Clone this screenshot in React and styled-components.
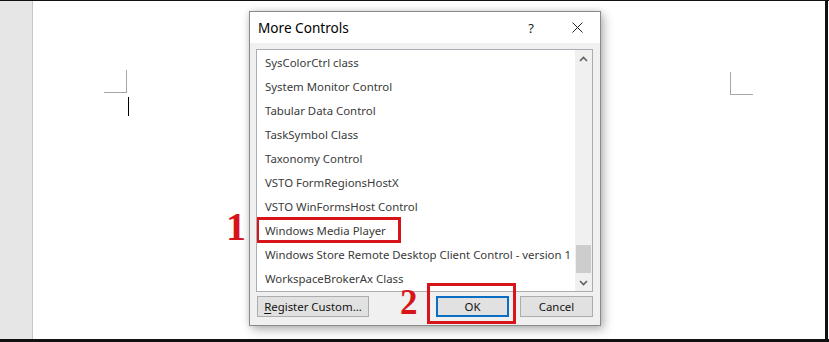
import React from 'react'
import styled, { createGlobalStyle } from 'styled-components'

const GlobalStyle = createGlobalStyle`
  html, body {
    margin: 0;
    padding: 0;
    background: #ffffff;
  }
  body {
    font-family: 'Noto Sans', 'Open Sans', sans-serif;
  }
`

const Frame = styled.div`
  width: 829px;
  height: 342px;
  box-sizing: border-box;
  border-top: 1px solid #111;
  border-bottom: 3px solid #111;
  display: grid;
  grid-template-columns: 32px 1px 792px 3px 1fr;
  background: #fff;
  overflow: hidden;
`

const Rail = styled.div`
  background: #e6e6e6;
`

const RailEdge = styled.div`
  background: #c6c6c6;
`

const Page = styled.div`
  position: relative;
  background: #ffffff;
`

const RightEdge = styled.div`
  background: #111;
`

const Corner = styled.div`
  position: absolute;
  top: ${p => p.top}px;
  left: ${p => p.left}px;
  width: 23px;
  height: 23px;
  box-sizing: border-box;
  border-bottom: 1px solid #a6a6a6;
  ${p => (p.side === 'left' ? 'border-right: 1px solid #a6a6a6;' : 'border-left: 1px solid #a6a6a6;')}
`

const Caret = styled.div`
  position: absolute;
  left: 95px;
  top: 96px;
  width: 1px;
  height: 19px;
  background: #000;
`

const Dialog = styled.div`
  position: absolute;
  left: 216px;
  top: 10px;
  width: 352px;
  height: 315px;
  box-sizing: border-box;
  border: 1px solid #8a8a8a;
  background: #f0f0f0;
  display: flex;
  flex-direction: column;
  box-shadow: 3px 4px 10px rgba(0, 0, 0, 0.28), 0 0 6px rgba(0, 0, 0, 0.12);
`

const TitleBar = styled.div`
  height: 31px;
  background: #ffffff;
  display: flex;
  align-items: center;
  padding-left: 8px;
  font-size: 13.6px;
  color: #000;
`

const Title = styled.span`
  flex: 1;
`

const TitleButton = styled.span`
  width: 46px;
  height: 31px;
  display: flex;
  align-items: center;
  justify-content: center;
  font-size: 13px;
  color: #222;
`

const Body = styled.div`
  flex: 1;
  padding: 6px 7px 8px 6px;
  display: flex;
  flex-direction: column;
  gap: 4px;
`

const ListBox = styled.div`
  height: 243px;
  box-sizing: border-box;
  border: 1px solid #aaadb3;
  background: #fff;
  display: flex;
`

const Items = styled.ul`
  flex: 1;
  list-style: none;
  margin: 0;
  padding: 0;
  overflow: hidden;
`

const Item = styled.li`
  position: relative;
  height: 24px;
  line-height: 26px;
  padding-left: 8px;
  font-size: 11.4px;
  color: #3a3a3a;
  white-space: nowrap;
  ${p =>
    p.marked &&
    `
    &::after {
      content: '';
      position: absolute;
      left: -1px;
      top: -1px;
      width: 145px;
      height: 26px;
      box-sizing: border-box;
      border: 3px solid #d7141a;
    }
  `}
`

const Callout = styled.span`
  position: absolute;
  z-index: 2;
  font-family: 'Liberation Serif', serif;
  font-weight: bold;
  color: #d7141a;
  line-height: 1;
  font-size: ${p => p.size}px;
  left: ${p => p.x}px;
  top: ${p => p.y}px;
`

const ScrollBar = styled.div`
  width: 17px;
  background: #f0f0f0;
  display: flex;
  flex-direction: column;
  align-items: center;
`

const Arrow = styled.div`
  height: 17px;
  width: 17px;
  display: flex;
  align-items: center;
  justify-content: center;
`

const Track = styled.div`
  flex: 1;
  width: 100%;
  display: flex;
  flex-direction: column;
  justify-content: flex-end;
  padding-bottom: 1px;
`

const Thumb = styled.div`
  height: 28px;
  margin: 0 1px;
  background: #cdcdcd;
`

const ButtonRow = styled.div`
  display: flex;
  align-items: center;
`

const Button = styled.button`
  height: 21px;
  width: ${p => p.w}px;
  margin-left: ${p => p.gap || 0}px;
  box-sizing: border-box;
  padding: 0;
  font-family: 'Noto Sans', 'Open Sans', sans-serif;
  font-size: 11.4px;
  color: #111;
  background: #e1e1e1;
  border: ${p => (p.primary ? '2px solid #0a6fc2' : '1px solid #adadad')};
  position: relative;
  ${p =>
    p.marked &&
    `
    &::after {
      content: '';
      position: absolute;
      left: -11px;
      top: -15px;
      right: -9px;
      bottom: -9px;
      border: 3px solid #d7141a;
    }
  `}
  u {
    text-decoration: underline;
    text-underline-offset: 2px;
  }
`

const items = [
  'SysColorCtrl class',
  'System Monitor Control',
  'Tabular Data Control',
  'TaskSymbol Class',
  'Taxonomy Control',
  'VSTO FormRegionsHostX',
  'VSTO WinFormsHost Control',
  'Windows Media Player',
  'Windows Store Remote Desktop Client Control - version 1',
  'WorkspaceBrokerAx Class',
]

const Chevron = ({ up }) => (
  <svg width="9" height="6" viewBox="0 0 9 6">
    <path
      d={up ? 'M1 5 L4.5 1.5 L8 5' : 'M1 1 L4.5 4.5 L8 1'}
      fill="none"
      stroke="#606060"
      strokeWidth="1.6"
    />
  </svg>
)

export default function App() {
  return (
    <>
      <GlobalStyle />
      <Frame>
        <Rail />
        <RailEdge />
        <Page>
          <Corner side="left" left={71} top={69} />
          <Caret />
          <Corner side="right" left={697} top={71} />
          <Dialog>
            <TitleBar>
              <Title>More Controls</Title>
              <TitleButton>?</TitleButton>
              <TitleButton>
                <svg width="11" height="11" viewBox="0 0 11 11">
                  <path d="M0.5 0.5 L10.5 10.5 M10.5 0.5 L0.5 10.5" stroke="#222" strokeWidth="1" />
                </svg>
              </TitleButton>
            </TitleBar>
            <Body>
              <ListBox>
                <Items>
                  {items.map(name => (
                    <Item key={name} marked={name === 'Windows Media Player'}>
                      {name}
                    </Item>
                  ))}
                </Items>
                <ScrollBar>
                  <Arrow>
                    <Chevron up />
                  </Arrow>
                  <Track>
                    <Thumb />
                  </Track>
                  <Arrow>
                    <Chevron />
                  </Arrow>
                </ScrollBar>
              </ListBox>
              <ButtonRow>
                <Button w={112} gap={1}>
                  <u>R</u>egister Custom...
                </Button>
                <Button w={73} gap={67} primary marked>
                  OK
                </Button>
                <Button w={73} gap={11}>
                  Cancel
                </Button>
              </ButtonRow>
            </Body>
          </Dialog>
          <Callout size={40} x={193} y={206}>1</Callout>
          <Callout size={35} x={367} y={284}>2</Callout>
        </Page>
        <RightEdge />
        <div />
      </Frame>
    </>
  )
}
